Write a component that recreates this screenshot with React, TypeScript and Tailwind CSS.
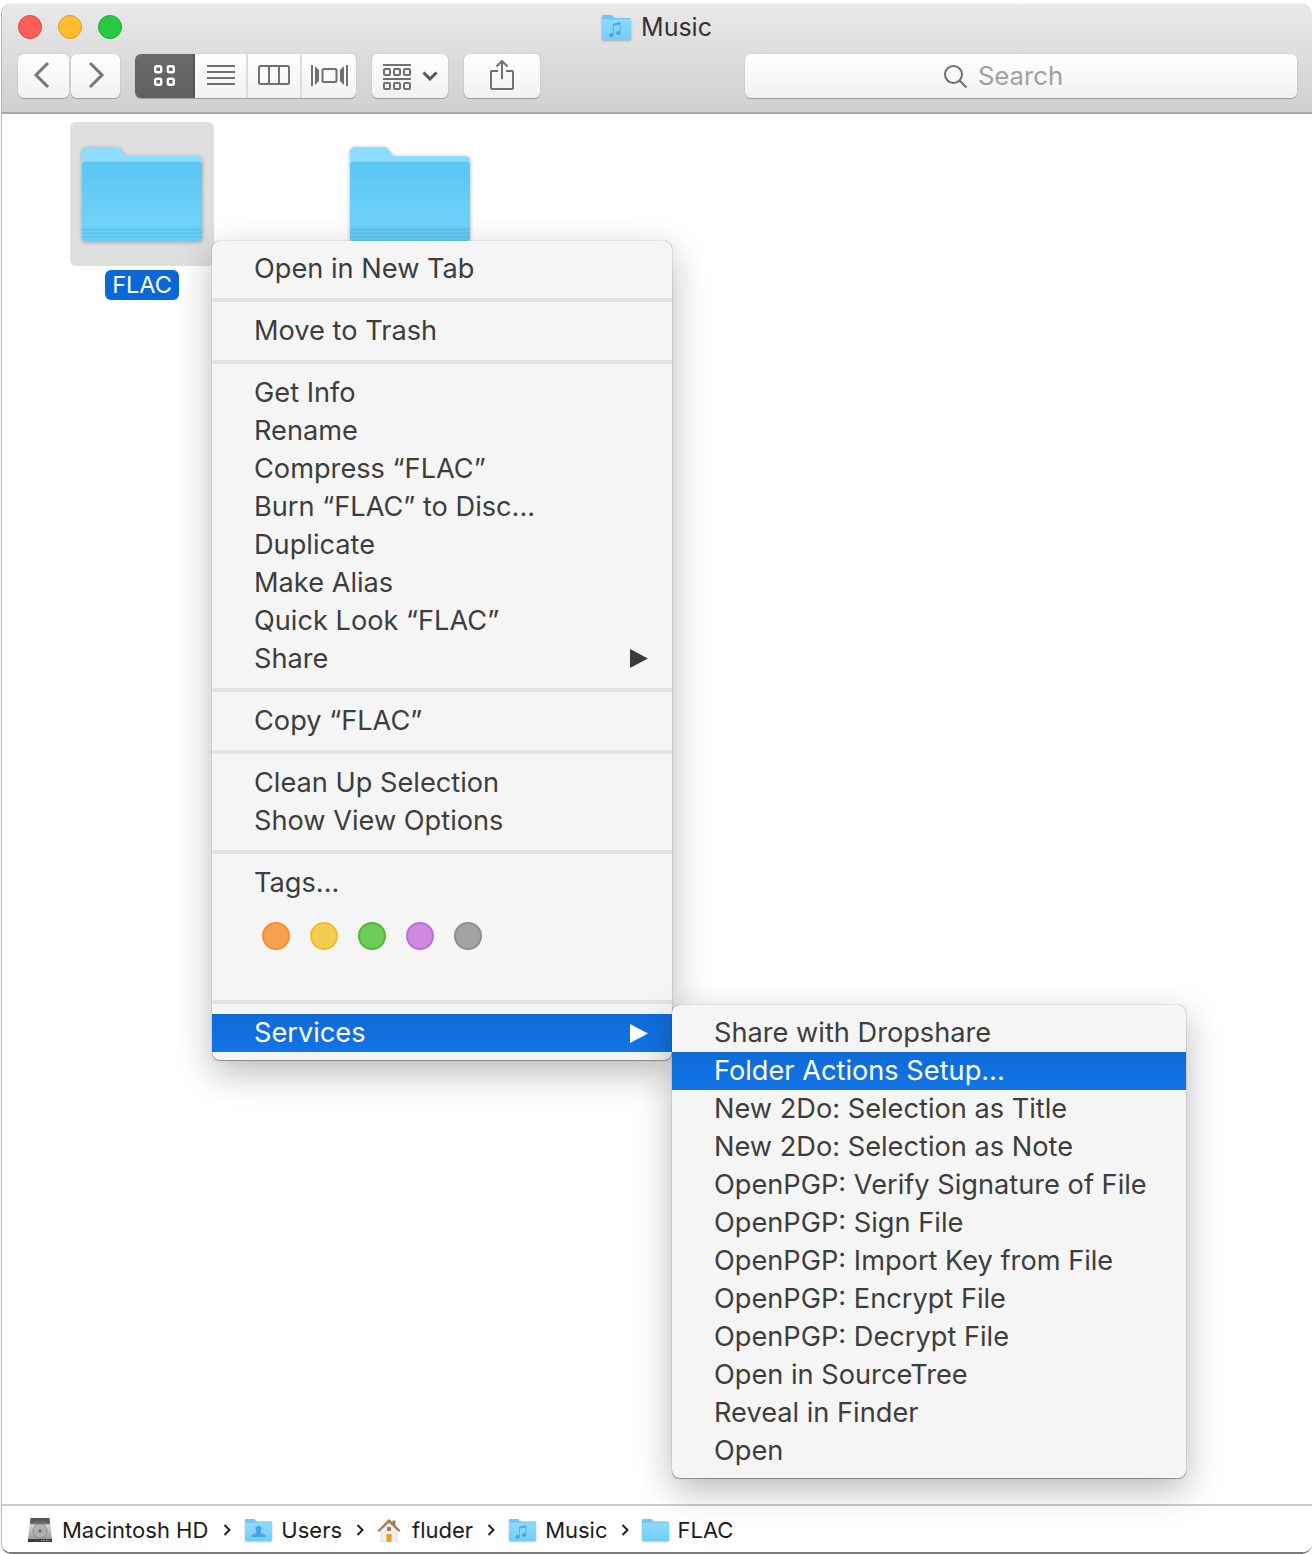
import React from "react";

const FONT = "[font-family:Inter,'Liberation_Sans',sans-serif]";

function Folder({ className }: { className: string }) {
  return (
    <svg viewBox="0 0 121 95" preserveAspectRatio="none" className={className}>
      <defs>
        <linearGradient id="fbody" x1="0" y1="0" x2="0" y2="1">
          <stop offset="0" stopColor="#5ac6f3" />
          <stop offset="1" stopColor="#75d5fc" />
        </linearGradient>
      </defs>
      <path d="M0 5a5 5 0 0 1 5-5h29c3 0 4 1 6 4l3 4c1 1 2 1 4 1h69a5 5 0 0 1 5 5v20H0z" fill="#8edcff" />
      <path d="M0 19a4 4 0 0 1 4-4h113a4 4 0 0 1 4 4v72a4 4 0 0 1-4 4H4a4 4 0 0 1-4-4z" fill="url(#fbody)" />
      <path d="M0 81h121v10a4 4 0 0 1-4 4H4a4 4 0 0 1-4-4z" fill="#69cef6" />
      <path d="M0 83.5h121M0 87h121M0 91h121" stroke="#56bdea" strokeWidth="1" fill="none" />
    </svg>
  );
}

function SmallFolder({ className, glyph }: { className: string; glyph?: "music" | "user" }) {
  return (
    <svg viewBox="0 0 30 24" preserveAspectRatio="none" className={`drop-shadow-[0_1px_1px_rgba(0,0,0,0.25)] ${className}`}>
      <defs>
        <linearGradient id="sbody" x1="0" y1="0" x2="0" y2="1">
          <stop offset="0" stopColor="#8fdafd" />
          <stop offset="1" stopColor="#72ccf7" />
        </linearGradient>
      </defs>
      <path d="M0 1.5A1.5 1.5 0 0 1 1.5 0h8c1 0 1.3.5 2 1.5l.6.8c.3.4.6.5 1 .5h15.4A1.5 1.5 0 0 1 30 4.3V10H0z" fill="#6fc8f2" />
      <path d="M0 5a1 1 0 0 1 1-1h28a1 1 0 0 1 1 1v18a1 1 0 0 1-1 1H1a1 1 0 0 1-1-1z" fill="url(#sbody)" />
      {glyph === "music" && (
        <path d="M12 19.5a2.3 2 0 1 1-.8-1.5V8.5l8-1.7v10.700a2.3 2 0 1 1-.8-1.500V9l-6.400 1.400z" fill="#47a6dc" />
      )}
      {glyph === "user" && (
        <path d="M15 7a3.4 4 0 0 1 2.5 6.5c-.5 1 0 1.8 1.5 2.3 2 .7 3.5 1.3 4 3.700H7c.5-2.400 2-3 4-3.700 1.500-.5 2-1.300 1.500-2.300A3.400 4 0 0 1 15 7z" fill="#47a6dc" />
      )}
    </svg>
  );
}

function Tile({ label, selected }: { label?: string; selected?: boolean }) {
  return (
    <div className="flex w-[144px] flex-col items-center">
      <div className={`flex h-[144px] w-[144px] items-start justify-center rounded-[6px] pt-[25px] ${selected ? "bg-[#dfdfdf]" : ""}`}>
        <Folder className="h-[94px] w-[120px] drop-shadow-[0_1px_2px_rgba(0,0,0,0.3)]" />
      </div>
      {label && (
        <div className="mt-[4px] flex h-[30px] w-[74px] items-center justify-center rounded-[6px] bg-[#0a68d8] text-[23.5px] leading-none text-white">
          {label}
        </div>
      )}
    </div>
  );
}

function Btn({ className, children }: { className: string; children?: React.ReactNode }) {
  return (
    <div className={`flex h-[44px] items-center justify-center rounded-[6px] bg-gradient-to-b from-white to-[#f1f1f1] shadow-[0_1px_1px_rgba(0,0,0,0.25),0_0_1px_rgba(0,0,0,0.25)] ${className}`}>
      {children}
    </div>
  );
}

function Arrow({ className }: { className: string }) {
  return (
    <svg viewBox="0 0 18 19" className={`h-[19px] w-[18px] ${className}`}>
      <path d="M0 0l18 9.5L0 19z" fill="currentColor" />
    </svg>
  );
}

function Sep({ className }: { className: string }) {
  return <div className={`h-[4px] bg-[#e3e3e3] ${className}`} />;
}

function Item({ text, arrow, active, drop }: { text: string; arrow?: boolean; active?: boolean; drop?: boolean }) {
  return (
    <div className={`flex h-[38px] items-center justify-between pl-[42px] pr-[24px] ${active ? "bg-gradient-to-b from-[#0f6bd6] to-[#1274e8] text-white" : ""}`}>
      <span className={drop ? "translate-y-[1px]" : ""}>{text}</span>
      {arrow && <Arrow className={active ? "text-white" : "text-[#3c3c3c]"} />}
    </div>
  );
}

const SEP = "mt-[11px] mb-[9px]";
const menuShell =
  "absolute rounded-[8px] bg-[#f5f5f5] text-[27.2px] leading-none text-[#3d3d3d] shadow-[0_0_1px_rgba(0,0,0,0.5),0_1px_1px_rgba(0,0,0,0.3),0_12px_36px_rgba(0,0,0,0.28)]";

function TagDot({ className }: { className: string }) {
  return <div className={`h-[28px] w-[28px] rounded-full border-2 ${className}`} />;
}

const services = [
  "Share with Dropshare",
  "Folder Actions Setup...",
  "New 2Do: Selection as Title",
  "New 2Do: Selection as Note",
  "OpenPGP: Verify Signature of File",
  "OpenPGP: Sign File",
  "OpenPGP: Import Key from File",
  "OpenPGP: Encrypt File",
  "OpenPGP: Decrypt File",
  "Open in SourceTree",
  "Reveal in Finder",
  "Open",
];

function PathChevron({ className }: { className: string }) {
  return (
    <svg viewBox="0 0 8 12" className={`h-[12px] w-[8px] ${className}`}>
      <path d="M1.5 1l5 5-5 5" fill="none" stroke="#222" strokeWidth="2" />
    </svg>
  );
}

export default function App() {
  return (
    <div className={`relative h-[1554px] w-[1312px] overflow-hidden bg-white pt-[3px] ${FONT}`}>
      <div className="ml-[1px] flex h-full flex-col overflow-hidden rounded-[10px] border-b-2 border-l border-[#b4b4b4] border-b-[#7a7a7a]">
        {/* title bar */}
        <div className="h-[111px] shrink-0 border-b-2 border-[#a9a9a9] bg-gradient-to-b from-[#e9e9e9] to-[#d0d0d0] shadow-[inset_0_1px_0_#f5f5f5]">
          <div className="grid h-[48px] grid-cols-[1fr_auto_1fr] items-center px-[16px]">
            <div className="flex gap-[16px]">
              <div className="h-[24px] w-[24px] rounded-full border border-[#e0443e] bg-[#ff5f57]" />
              <div className="h-[24px] w-[24px] rounded-full border border-[#dea123] bg-[#ffbd2e]" />
              <div className="h-[24px] w-[24px] rounded-full border border-[#1aab29] bg-[#28c940]" />
            </div>
            <div className="flex items-center gap-[10px] text-[25px] leading-none text-[#333]">
              <SmallFolder glyph="music" className="h-[25px] w-[29px]" />
              <span>Music</span>
            </div>
            <div />
          </div>
          <div className="flex items-center pl-[16px] pr-[15px] pt-[3px]">
            <Btn className="w-[51px]">
              <svg viewBox="0 0 18 28" className="h-[28px] w-[18px] -translate-x-[2px] -translate-y-[1px]">
                <path d="M15 2L3 14l12 12" fill="none" stroke="#777" strokeWidth="3" />
              </svg>
            </Btn>
            <Btn className="ml-[2px] w-[49px]">
              <svg viewBox="0 0 18 28" className="h-[28px] w-[18px] -translate-y-[1px]">
                <path d="M3 2l12 12L3 26" fill="none" stroke="#777" strokeWidth="3" />
              </svg>
            </Btn>
            <Btn className="ml-[15px] w-[221px] justify-start overflow-hidden">
              <div className="flex h-full w-[60px] items-center justify-center border-r-2 border-[#555] bg-gradient-to-b from-[#6a6a6a] to-[#606060]">
                <svg viewBox="0 0 21 21" className="h-[21px] w-[21px] -translate-y-[1px]">
                  <g fill="none" stroke="#fff" strokeWidth="2.4">
                    <rect x="1.2" y="1.2" width="6" height="6" rx="1.5" />
                    <rect x="13.8" y="1.2" width="6" height="6" rx="1.5" />
                    <rect x="1.2" y="13.8" width="6" height="6" rx="1.5" />
                    <rect x="13.8" y="13.8" width="6" height="6" rx="1.5" />
                  </g>
                </svg>
              </div>
              <div className="flex h-full w-[53px] items-center justify-center border-r-2 border-[#dcdcdc]">
                <svg viewBox="0 0 28 20" className="h-[20px] w-[28px] -translate-y-[1px]">
                  <path d="M0 1h28M0 7h28M0 13h28M0 19h28" stroke="#707070" strokeWidth="1.8" />
                </svg>
              </div>
              <div className="flex h-full w-[54px] items-center justify-center border-r-2 border-[#dcdcdc]">
                <svg viewBox="0 0 32 20" className="h-[20px] w-[32px] -translate-y-[1px]">
                  <path d="M11 1v18M21 1v18" stroke="#707070" strokeWidth="2" />
                  <rect x="1" y="1" width="30" height="18" rx="1.5" fill="none" stroke="#707070" strokeWidth="2" />
                </svg>
              </div>
              <div className="flex h-full flex-1 items-center justify-center">
                <svg viewBox="0 0 37 21" className="h-[21px] w-[37px] -translate-y-[1px]">
                  <rect x="11.5" y="4" width="14" height="13" rx="1.5" fill="none" stroke="#707070" strokeWidth="2" />
                  <path d="M1 0v21M36 0v21" stroke="#707070" strokeWidth="2" />
                  <path d="M4 1v19l4-4V5zM33 1v19l-4-4V5z" fill="#707070" />
                </svg>
              </div>
            </Btn>
            <Btn className="ml-[16px] w-[76px] gap-[11px]">
              <svg viewBox="0 0 28 26" className="h-[26px] w-[28px] translate-y-[1px]">
                <path d="M0 1h28M0 15h28" stroke="#707070" strokeWidth="2" />
                <g fill="none" stroke="#707070" strokeWidth="2">
                  <rect x="1" y="5" width="6" height="6" rx="1" />
                  <rect x="11" y="5" width="6" height="6" rx="1" />
                  <rect x="21" y="5" width="6" height="6" rx="1" />
                  <rect x="1" y="19" width="6" height="6" rx="1" />
                  <rect x="11" y="19" width="6" height="6" rx="1" />
                  <rect x="21" y="19" width="6" height="6" rx="1" />
                </g>
              </svg>
              <svg viewBox="0 0 16 10" className="h-[10px] w-[16px]">
                <path d="M1.5 1.5L8 8l6.5-6.5" fill="none" stroke="#555" strokeWidth="3" />
              </svg>
            </Btn>
            <Btn className="ml-[16px] w-[76px]">
              <svg viewBox="0 0 24 30" className="h-[30px] w-[24px] -translate-y-[1px]">
                <path d="M12 19V1M6.5 6.5L12 1l5.5 5.5" fill="none" stroke="#707070" strokeWidth="2" />
                <path d="M8 11H2a1 1 0 0 0-1 1v16a1 1 0 0 0 1 1h20a1 1 0 0 0 1-1V12a1 1 0 0 0-1-1h-6" fill="none" stroke="#707070" strokeWidth="2" />
              </svg>
            </Btn>
            <Btn className="ml-auto w-[552px] gap-[10px] pr-[36px]">
              <svg viewBox="0 0 25 25" className="h-[25px] w-[25px]">
                <circle cx="10.5" cy="10.5" r="8.5" fill="none" stroke="#6e6e6e" strokeWidth="2" />
                <path d="M16.5 16.5l7 7" stroke="#6e6e6e" strokeWidth="2" />
              </svg>
              <span className="text-[25.7px] leading-none text-[#a0a0a0]">Search</span>
            </Btn>
          </div>
        </div>

        {/* icon area */}
        <div className="flex flex-1 items-start gap-[124px] bg-white pl-[68px] pt-[8px]">
          <Tile label="FLAC" selected />
          <Tile />
        </div>

        {/* path bar */}
        <div className="flex h-[48px] shrink-0 items-center border-t-2 border-[#cbcbcb] bg-white pl-[25px] pt-[2px] text-[22px] leading-none text-[#1c1c1c]">
          <svg viewBox="0 0 26 26" className="mr-[9px] h-[26px] w-[26px]">
            <defs>
              <linearGradient id="hd" x1="0" y1="0" x2="0" y2="1">
                <stop offset="0" stopColor="#4f4f4f" />
                <stop offset="0.22" stopColor="#6a6a6a" />
                <stop offset="0.3" stopColor="#d4d4d4" />
                <stop offset="1" stopColor="#8f8f8f" />
              </linearGradient>
            </defs>
            <path d="M3.5 1h19l2.5 21v2a1 1 0 0 1-1 1H2a1 1 0 0 1-1-1v-2z" fill="url(#hd)" />
            <circle cx="13" cy="14" r="7" fill="#b2b2b2" stroke="#8a8a8a" />
            <circle cx="13" cy="14" r="1.8" fill="#6a6a6a" />
            <path d="M1 22h24v3H1z" fill="#3d3d3d" />
            <path d="M14 23.5h8" stroke="#aaa" strokeWidth="1" strokeDasharray="1.5 1" />
          </svg>
          <span>Macintosh HD</span>
          <PathChevron className="ml-[15px] mr-[14px]" />
          <SmallFolder glyph="user" className="mr-[9px] h-[22px] w-[27px]" />
          <span>Users</span>
          <PathChevron className="ml-[14px] mr-[13px]" />
          <svg viewBox="0 0 24 24" className="mr-[11px] h-[24px] w-[24px]">
            <path d="M4 12.5L12 5l8 7.5V24H4z" fill="#f4f1ea" stroke="#cfcabc" strokeWidth="0.6" />
            <path d="M0.5 12.5L12 1l3.5 3.5V2.5h3v5l5 5-1.5 1.5L12 4.5 2 14z" fill="#a47b50" />
            <rect x="9.5" y="16" width="5" height="8" fill="#ee9a2a" />
            <rect x="10" y="9" width="4" height="4" fill="#8f8471" />
          </svg>
          <span>fluder</span>
          <PathChevron className="ml-[14px] mr-[14px]" />
          <SmallFolder glyph="music" className="mr-[9px] h-[22px] w-[27px]" />
          <span>Music</span>
          <PathChevron className="ml-[13px] mr-[13px]" />
          <SmallFolder className="mr-[9px] h-[22px] w-[27px]" />
          <span>FLAC</span>
        </div>
      </div>

      {/* context menu */}
      <div className={`${menuShell} left-[212px] top-[241px] w-[460px] pt-[8px]`}>
        <Item drop text="Open in New Tab" />
        <Sep className={SEP} />
        <Item drop text="Move to Trash" />
        <Sep className={SEP} />
        <Item drop text="Get Info" />
        <Item drop text="Rename" />
        <Item drop text="Compress “FLAC”" />
        <Item drop text="Burn “FLAC” to Disc..." />
        <Item drop text="Duplicate" />
        <Item drop text="Make Alias" />
        <Item drop text="Quick Look “FLAC”" />
        <Item drop text="Share" arrow />
        <Sep className={SEP} />
        <Item drop text="Copy “FLAC”" />
        <Sep className={SEP} />
        <Item drop text="Clean Up Selection" />
        <Item drop text="Show View Options" />
        <Sep className={SEP} />
        <Item drop text="Tags..." />
        <div className="flex h-[99px] gap-[20px] pl-[50px] pt-[21px]">
          <TagDot className="border-[#f5902b] bg-[#f7a24f]" />
          <TagDot className="border-[#f3bd2e] bg-[#f3cb52]" />
          <TagDot className="border-[#4fb935] bg-[#6dcb5a]" />
          <TagDot className="border-[#c06fd8] bg-[#d08ae0]" />
          <TagDot className="border-[#8e8e8e] bg-[#a3a3a3]" />
        </div>
        <Sep className="mb-[10px]" />
        <Item text="Services" arrow active />
        <div className="h-[8px]" />
      </div>

      {/* services submenu */}
      <div className={`${menuShell} left-[672px] top-[1005px] w-[514px] pb-[8px] pt-[9px]`}>
        {services.map((s) => (
          <Item key={s} text={s} active={s.startsWith("Folder")} />
        ))}
      </div>
    </div>
  );
}
